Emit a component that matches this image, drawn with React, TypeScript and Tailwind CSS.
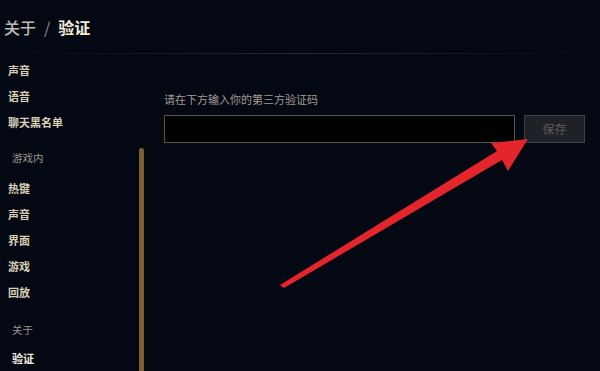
const font = { fontFamily: '"Noto Sans CJK SC", "Noto Sans", sans-serif' };

type NavItem = { label: string; kind: "item" | "section" | "active"; gap?: string };

const navItems: NavItem[] = [
  { label: "声音", kind: "item" },
  { label: "语音", kind: "item" },
  { label: "聊天黑名单", kind: "item" },
  { label: "游戏内", kind: "section", gap: "mt-[10px]" },
  { label: "热键", kind: "item", gap: "mt-[4px]" },
  { label: "声音", kind: "item" },
  { label: "界面", kind: "item" },
  { label: "游戏", kind: "item" },
  { label: "回放", kind: "item" },
  { label: "关于", kind: "section", gap: "mt-[12px]" },
  { label: "验证", kind: "active", gap: "mt-[2px]" },
];

function Sidebar() {
  return (
    <div className="relative w-[150px] shrink-0 pt-[3px]">
      {navItems.map((item, i) => {
        let cls = "pl-[8px] font-bold text-[11px] text-[#d9cfb5]";
        if (item.kind === "section") cls = "pl-[12px] text-[10.5px] text-[#9a978f]";
        if (item.kind === "active") cls = "pl-[12px] font-bold text-[11px] text-[#f2ede2]";
        return (
          <div key={i} className={`flex h-[26px] items-center ${item.gap ?? ""} ${cls}`}>
            {item.label}
          </div>
        );
      })}
      {/* scrollbar */}
      <div className="absolute left-[139px] top-[94px] bottom-0 w-[5px] rounded-t-full bg-[#7b6032]" />
    </div>
  );
}

function VerifyPanel() {
  return (
    <div className="flex-1 pl-[14px] pt-[38px]">
      <div className="text-[11px] leading-[14px] text-[#a19d93]">请在下方输入你的第三方验证码</div>
      <div className="mt-[9px] flex gap-[9px]">
        <input
          className="h-[28px] w-[351px] border border-[#55544f] bg-[#010101] px-2 text-[12px] text-white outline-none"
          style={font}
        />
        <button
          className="h-[28px] w-[61px] border border-[#404145] bg-[#1e2226] text-[12px] text-[#5e5d59]"
          style={font}
        >
          保存
        </button>
      </div>
    </div>
  );
}

function Arrow() {
  return (
    <svg className="pointer-events-none absolute left-0 top-0" width="600" height="371" viewBox="0 0 600 371">
      <polygon
        points="280,285 497,151 491,143 528,139 508,171 502,160 284,288"
        fill="#e4252b"
        strokeLinejoin="round"
      />
    </svg>
  );
}

export default function App() {
  return (
    <div className="relative h-[371px] w-[600px] overflow-hidden bg-[#030812]" style={font}>
      <div className="flex h-[53px] items-center pl-[4px] text-[16px]">
        <span className="font-medium text-[#bdbab3]">关于</span>
        <span className="mx-[8px] text-[#8f8c86]">/</span>
        <span className="font-bold text-[#f2ebda]">验证</span>
      </div>
      <div className="mx-[4px] h-px bg-gradient-to-r from-transparent via-[#232a36] to-transparent" />
      <div className="flex h-[317px]">
        <Sidebar />
        <VerifyPanel />
      </div>
      <Arrow />
    </div>
  );
}
